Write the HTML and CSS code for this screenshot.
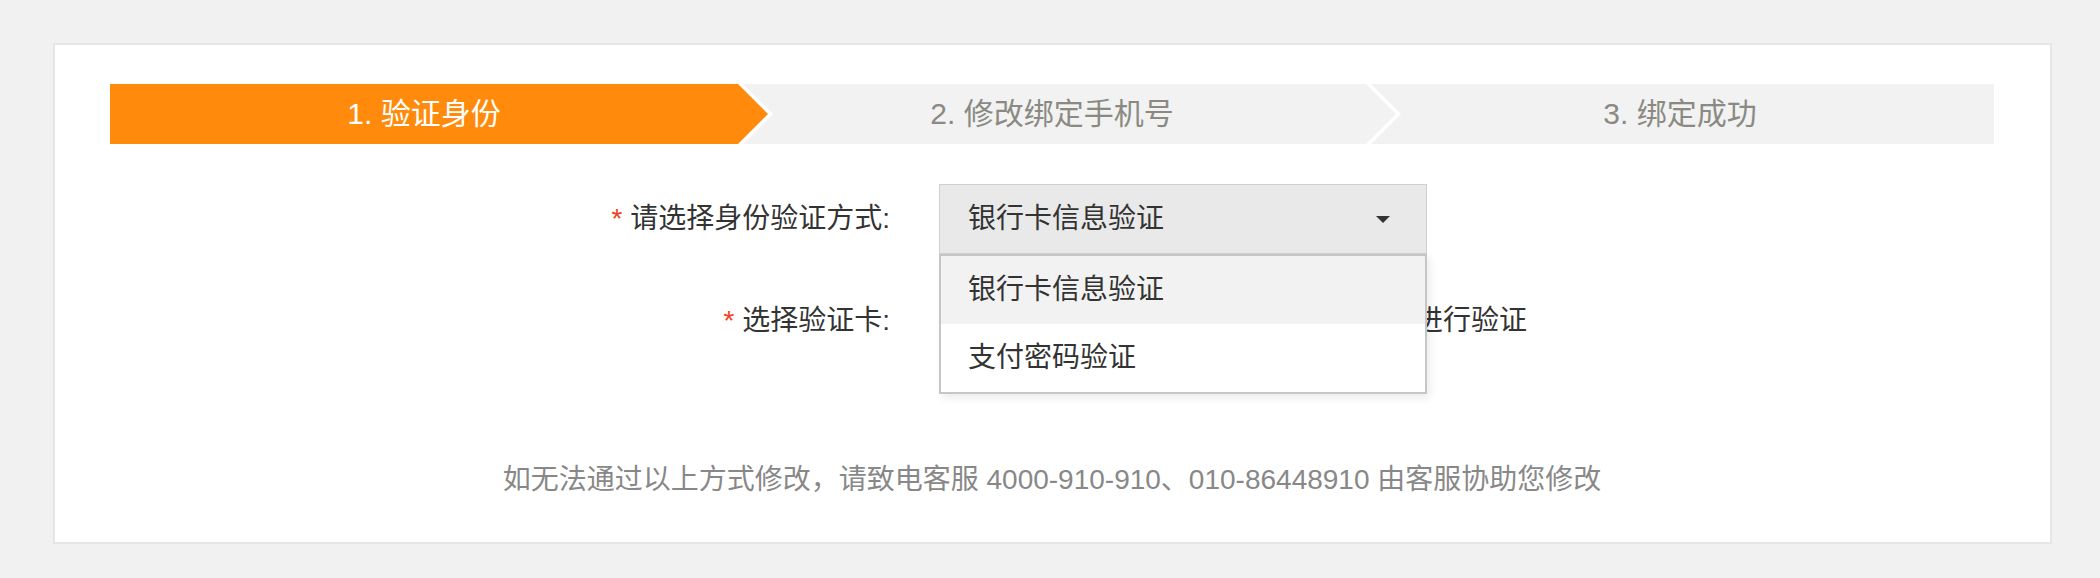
FILE: index.html
```html
<!DOCTYPE html>
<html lang="zh-CN">
<head>
<meta charset="utf-8">
<title>验证身份</title>
<link rel="stylesheet" href="styles.css">
</head>
<body>
<div class="card">
  <ol class="steps">
    <li class="step active">1. 验证身份</li>
    <li class="step">2. 修改绑定手机号</li>
    <li class="step last">3. 绑定成功</li>
  </ol>
  <div class="form">
    <div class="row">
      <div class="label"><span class="req">*</span> 请选择身份验证方式:</div>
      <div class="control">
        <div class="select">
          <span>银行卡信息验证</span>
          <i class="caret"></i>
        </div>
        <ul class="menu">
          <li class="item hover">银行卡信息验证</li>
          <li class="item">支付密码验证</li>
        </ul>
      </div>
    </div>
    <div class="row">
      <div class="label"><span class="req">*</span> 选择验证卡:</div>
      <div class="control text">您还没有绑定银行卡，请选择其他方式进行验证</div>
    </div>
  </div>
  <p class="note">如无法通过以上方式修改，请致电客服 4000-910-910、010-86448910 由客服协助您修改</p>
</div>
</body>
</html>
```

FILE: styles.css
```css
html, body {
  margin: 0;
  padding: 0;
  background: #f1f1f1;
  font-family: "Liberation Sans", "Noto Sans CJK SC", sans-serif;
  color: #333;
}

.card {
  box-sizing: border-box;
  width: 1999px;
  margin: 43px 0 0 53px;
  background: #fff;
  border: 2px solid #e6e6e6;
  padding: 39px 56px 42px 55px;
}

.steps {
  list-style: none;
  margin: 0;
  padding: 0;
  display: flex;
  height: 60px;
}

.step {
  position: relative;
  flex: 0 0 628px;
  height: 60px;
  line-height: 60px;
  text-align: center;
  font-size: 30px;
  color: #8a8a82;
  background: #f2f2f2;
}

.step.active {
  background: #ff8a0b;
  color: #fff;
}

.step::before,
.step::after {
  content: "";
  position: absolute;
  left: 100%;
  width: 0;
  height: 0;
  border-style: solid;
}

.step::before {
  top: -5px;
  border-width: 35px 0 35px 35px;
  border-color: transparent transparent transparent #fff;
  z-index: 1;
}

.step::after {
  top: 0;
  border-width: 30px 0 30px 30px;
  border-color: transparent transparent transparent #f2f2f2;
  z-index: 2;
}

.step.active::after {
  border-left-color: #ff8a0b;
}

.step.last::before,
.step.last::after {
  display: none;
}

.form {
  margin-top: 40px;
  display: flex;
  flex-direction: column;
  gap: 32px;
}

.row {
  display: grid;
  grid-template-columns: 780px 488px;
  column-gap: 49px;
  align-items: center;
  height: 70px;
  font-size: 28px;
}

.label {
  text-align: right;
  line-height: 40px;
  white-space: nowrap;
}

.req {
  color: #f2401f;
}

.control {
  position: relative;
  height: 70px;
}

.control.text {
  line-height: 70px;
  white-space: nowrap;
}

.select {
  box-sizing: border-box;
  height: 70px;
  border: 1px solid #d0d0d0;
  background: #e9e9e9;
  display: flex;
  align-items: center;
  justify-content: space-between;
  padding: 0 36px 0 28px;
  line-height: 40px;
}

.caret {
  width: 0;
  height: 0;
  border-style: solid;
  border-width: 7px 7px 0 7px;
  border-color: #333 transparent transparent transparent;
}

.menu {
  position: absolute;
  top: 100%;
  left: 0;
  z-index: 5;
  box-sizing: border-box;
  width: 488px;
  margin: 0;
  padding: 0;
  list-style: none;
  background: #fff;
  border: 2px solid #c6c6c6;
  box-shadow: 3px 4px 8px rgba(0, 0, 0, 0.08);
}

.item {
  height: 68px;
  line-height: 68px;
  padding-left: 27px;
}

.item.hover {
  background: #f2f2f2;
  height: 68px;
}

.note {
  margin: 104px 0 0;
  text-align: center;
  font-size: 28px;
  line-height: 40px;
  color: #888;
}
```
